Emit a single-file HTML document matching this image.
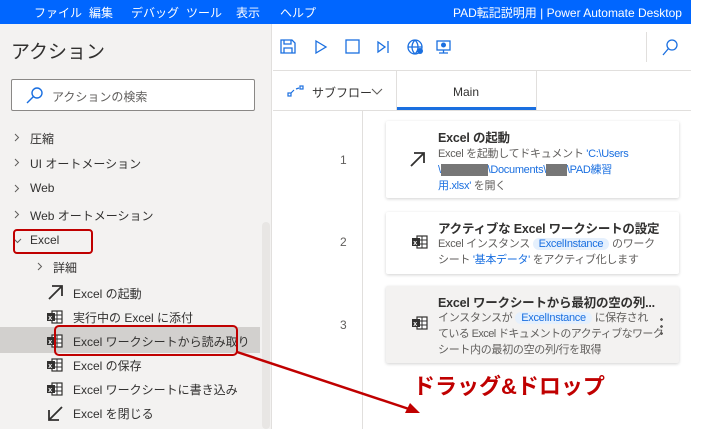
<!DOCTYPE html>
<html><head><meta charset="utf-8"><style>
*{margin:0;padding:0;box-sizing:border-box}
body{width:728px;height:429px;overflow:hidden;background:#fff;font-family:"Liberation Sans","Noto Sans CJK JP",sans-serif;position:relative;color:#323130}
.abs{position:absolute}
.top{left:0;top:0;width:691px;height:24px;background:#0066ff;color:#fff;font-size:12px}
.top span{position:absolute;top:4px;white-space:nowrap}
.left{left:0;top:24px;width:272px;height:405px;background:#f3f2f1;border-right:1px solid #e1dfdd}
.item{position:absolute;font-size:12px;color:#323130;white-space:nowrap}
.xl{position:absolute;width:16px;height:14px}
.card{position:absolute;left:386px;width:293px;background:#fff;box-shadow:0 1px 3px rgba(0,0,0,.18);border-radius:2px}
.ct{position:absolute;left:52px;font-size:12.5px;font-weight:bold;color:#323130;white-space:nowrap;letter-spacing:-0.2px}
.cd{position:absolute;left:52px;font-size:11px;line-height:16px;color:#605e5c;white-space:nowrap;letter-spacing:-0.3px}
.b{color:#1a6fe0}
.pill{background:#e5f0fd;color:#1a6fe0;border-radius:9px;padding:0 6px}
.ln{position:absolute;left:340px;font-size:12px;color:#605e5c}
</style></head><body>
<div class="abs top">
<span style="left:34px">ファイル</span><span style="left:89px">編集</span><span style="left:131px">デバッグ</span><span style="left:186px">ツール</span><span style="left:236px">表示</span><span style="left:280px">ヘルプ</span>
<span style="left:453px;font-size:12px">PAD転記説明用 | Power Automate Desktop</span>
</div>
<div class="abs left"></div>
<div class="abs" style="left:11px;top:37px;font-size:19px;color:#323130">アクション</div>
<div class="abs" style="left:11px;top:79px;width:244px;height:32px;border:1px solid #8a8886;background:#fff;border-radius:2px"></div>
<svg class="abs" style="left:25px;top:85px" width="20" height="20" viewBox="0 0 20 20"><circle cx="12" cy="8" r="5" fill="none" stroke="#1a6fe0" stroke-width="1.4"/><path d="M8.5 11.5L2 18" stroke="#1a6fe0" stroke-width="1.4"/></svg>
<div class="abs" style="left:52px;top:88px;font-size:12px;color:#605e5c">アクションの検索</div>
<svg class="abs" style="left:0;top:0" width="60" height="280"><g fill="none" stroke="#605e5c" stroke-width="1"><path d="M15 134L18.5 137.5L15 141M15 159L18.5 162.5L15 166M15 185L18.5 188.5L15 192M15 211L18.5 214.5L15 218M38 263L41.5 266.5L38 270"/><path d="M14 239L17.5 242.5L21 239"/></g></svg>
<div class="item" style="left:30px;top:130px">圧縮</div>
<div class="item" style="left:30px;top:155px">UI オートメーション</div>
<div class="item" style="left:30px;top:181px">Web</div>
<div class="item" style="left:30px;top:207px">Web オートメーション</div>
<div class="item" style="left:30px;top:233px">Excel</div>
<div class="abs" style="left:13px;top:229px;width:80px;height:25px;border:2.5px solid #c00000;border-radius:4px"></div>
<div class="item" style="left:53px;top:259px">詳細</div>
<div class="abs" style="left:0;top:327px;width:260px;height:26px;background:#d2d0ce"></div>
<div class="abs" style="left:262px;top:222px;width:8px;height:207px;background:#e8e6e4;border-radius:4px"></div>
<svg class="abs" style="left:47px;top:283px" width="18" height="18" viewBox="0 0 18 18"><path d="M2 16L15 3M5 3H15V13" stroke="#323130" stroke-width="1.8" fill="none"/></svg>
<div class="item" style="left:73px;top:285px">Excel の起動</div>
<svg class="abs" style="left:47px;top:405px" width="18" height="18" viewBox="0 0 18 18"><path d="M15 2L2 15M2 5V15H12" stroke="#323130" stroke-width="1.8" fill="none"/></svg>
<div class="item" style="left:73px;top:405px">Excel を閉じる</div>
<div class="item" style="left:73px;top:309px">実行中の Excel に添付</div>
<div class="item" style="left:73px;top:333px">Excel ワークシートから読み取り</div>
<div class="item" style="left:73px;top:357px">Excel の保存</div>
<div class="item" style="left:73px;top:381px">Excel ワークシートに書き込み</div>
<svg width="0" height="0" style="position:absolute"><defs><g id="x"><rect x="5" y="1" width="10" height="12" fill="#fff" stroke="#323130" stroke-width="1.2"/><path d="M5 5H15M5 9H15M10 1V13" stroke="#323130" stroke-width="1"/><rect x="0" y="3" width="8" height="8" fill="#323130"/><text x="1.2" y="10" font-size="7" fill="#fff" font-family="Liberation Sans" font-weight="bold">x</text></g></defs></svg>
<svg class="xl" style="left:47px;top:310px"><use href="#x"/></svg>
<svg class="xl" style="left:47px;top:334px"><use href="#x"/></svg>
<svg class="xl" style="left:47px;top:358px"><use href="#x"/></svg>
<svg class="xl" style="left:47px;top:382px"><use href="#x"/></svg>
<div class="abs" style="left:54px;top:325px;width:184px;height:31px;border:2.5px solid #c00000;border-radius:5px"></div>
<div class="abs" style="left:273px;top:70px;width:418px;height:1px;background:#e1dfdd"></div>
<div class="abs" style="left:273px;top:110px;width:418px;height:1px;background:#e1dfdd"></div>
<div class="abs" style="left:646px;top:32px;width:1px;height:30px;background:#e1dfdd"></div>
<div class="abs" style="left:362px;top:111px;width:1px;height:318px;background:#e1dfdd"></div>
<svg class="abs" style="left:280px;top:38px" width="172" height="20" viewBox="0 0 172 20">
<g fill="none" stroke="#1a6fe0" stroke-width="1.3">
<path d="M1 2H12L15 5V15H1Z M4 2V6H11V2 M4 15V10H12V15"/>
<path d="M36 3L46 9L36 15Z"/>
<rect x="66" y="2" width="13" height="13"/>
<path d="M98 4L105 9L98 14Z M108 3V15"/>
<circle cx="135" cy="9" r="7"/><path d="M128 9H142M135 2C131 6 131 12 135 16M135 2C139 6 139 12 135 16"/>
<rect x="157" y="3" width="13" height="9"/><path d="M163.5 12V15M159 15H168"/>
</g><circle cx="140" cy="13" r="3" fill="#1a6fe0"/><circle cx="163.5" cy="7" r="2.5" fill="#1a6fe0"/></svg>
<svg class="abs" style="left:660px;top:38px" width="20" height="20" viewBox="0 0 20 20"><circle cx="12" cy="7" r="5" fill="none" stroke="#1a6fe0" stroke-width="1.3"/><path d="M8.5 10.5L3 17" stroke="#1a6fe0" stroke-width="1.3"/></svg>
<svg class="abs" style="left:287px;top:84px" width="18" height="14" viewBox="0 0 18 14"><g fill="none" stroke="#1a6fe0" stroke-width="1.2"><rect x="1" y="9" width="3" height="3"/><rect x="13" y="2" width="3" height="3"/><path d="M4 9L7 6M9 5L12 4"/></g></svg>
<div class="abs" style="left:312px;top:84px;font-size:12px;color:#323130">サブフロー</div>
<svg class="abs" style="left:370px;top:86px" width="14" height="10"><path d="M2 3L7 8L12 3" fill="none" stroke="#605e5c" stroke-width="1.1"/></svg>
<div class="abs" style="left:396px;top:71px;width:1px;height:40px;background:#e1dfdd"></div>
<div class="abs" style="left:536px;top:71px;width:1px;height:40px;background:#e1dfdd"></div>
<div class="abs" style="left:397px;top:107px;width:139px;height:3px;background:#1a6fe0"></div>
<div class="abs" style="left:453px;top:85px;font-size:12px;color:#323130">Main</div>
<div class="ln" style="top:153px">1</div><div class="ln" style="top:235px">2</div><div class="ln" style="top:318px">3</div>
<div class="card" style="top:121px;height:77px">
<svg class="abs" style="left:23px;top:29px" width="18" height="18" viewBox="0 0 18 18"><path d="M2 16L15 3M5 3H15V13" stroke="#323130" stroke-width="1.8" fill="none"/></svg>
<div class="ct" style="top:6px">Excel の起動</div>
<div class="cd" style="top:25px">Excel を起動してドキュメント <span class="b">'C:\Users</span><br><span class="b">\<span style="background:#777;color:#777">xxxxxxxxx</span>\Documents\<span style="background:#777;color:#777">xxxx</span>\PAD練習</span><br><span class="b">用.xlsx'</span> を開く</div>
</div>
<div class="card" style="top:212px;height:62px">
<svg class="abs" style="left:26px;top:23px" width="16" height="14"><use href="#x"/></svg>
<div class="ct" style="top:6px">アクティブな Excel ワークシートの設定</div>
<div class="cd" style="top:24px">Excel インスタンス <span class="pill">ExcelInstance</span> のワーク<br>シート <span class="b">'基本データ'</span> をアクティブ化します</div>
</div>
<div class="card" style="top:286px;height:77px;background:#f3f2f1">
<svg class="abs" style="left:26px;top:30px" width="16" height="14"><use href="#x"/></svg>
<div class="ct" style="top:6px">Excel ワークシートから最初の空の列...</div>
<div class="cd" style="top:24px">インスタンスが <span class="pill">ExcelInstance</span> に保存され<br><span style="letter-spacing:-0.6px">ている Excel ドキュメントのアクティブなワーク</span><br>シート内の最初の空の列/行を取得</div>
<div class="abs" style="left:274px;top:30px;width:3px;height:20px;background:radial-gradient(circle,#605e5c 1.3px,transparent 1.5px) 0 0/3px 7px"></div>
</div>
<div class="abs" style="left:413px;top:369px;font-size:22px;font-weight:bold;color:#c00000;white-space:nowrap">ドラッグ&amp;ドロップ</div>
<svg class="abs" style="left:0;top:0" width="728" height="429"><path d="M237 352L412 410" stroke="#c00000" stroke-width="2.5"/><path d="M420 413L405 413L410 403Z" fill="#c00000"/></svg>
</body></html>
